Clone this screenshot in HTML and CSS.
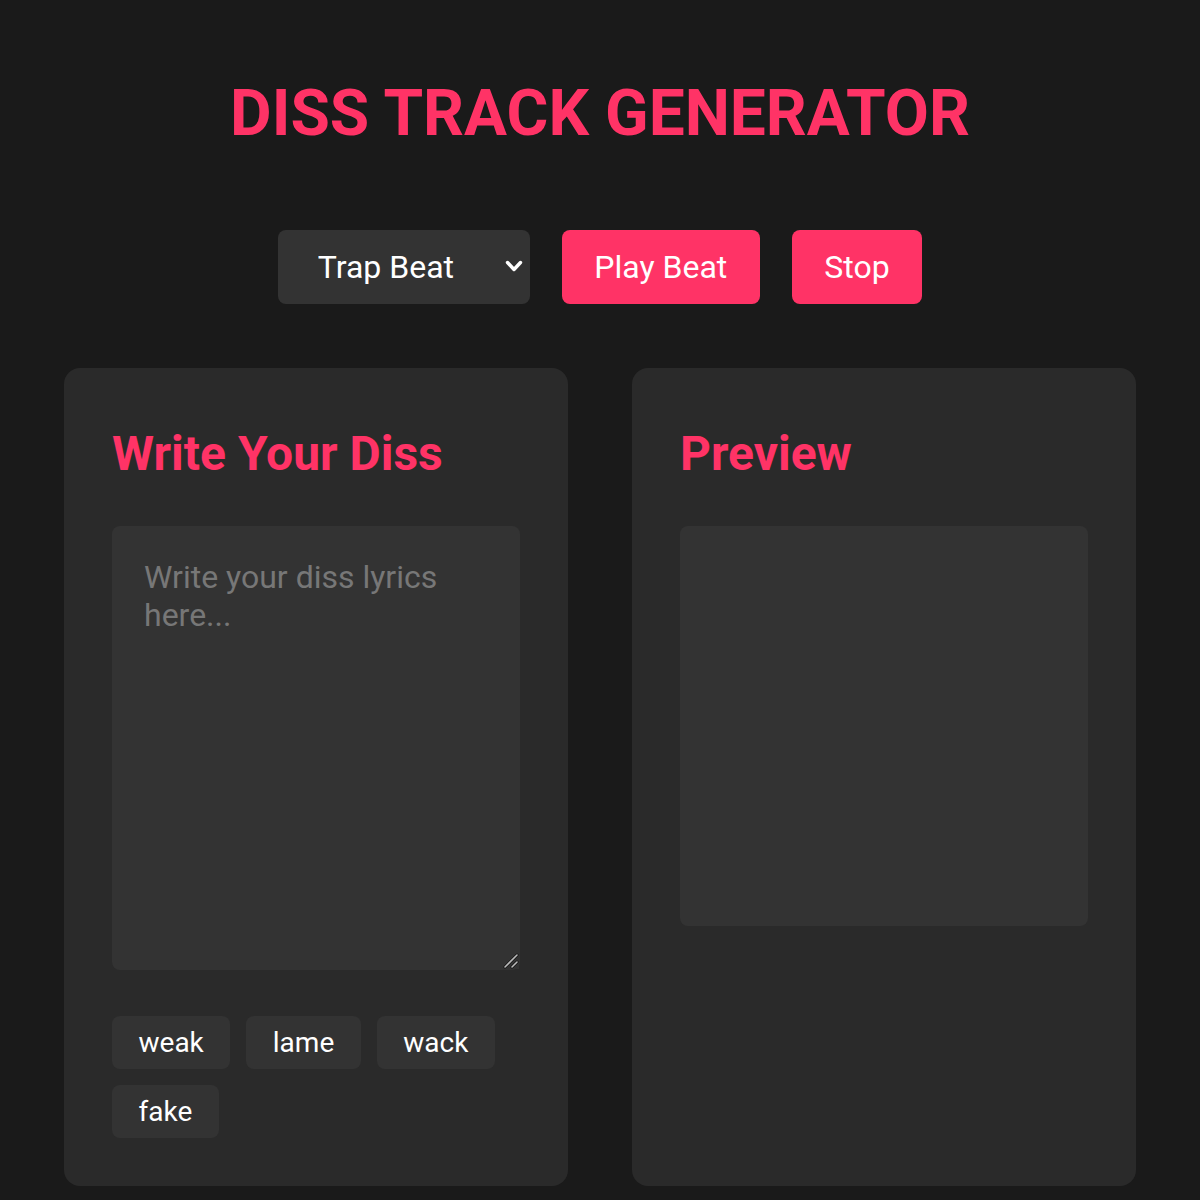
FILE: index.html
```html
<!DOCTYPE html>
<html lang="en">
<head>
    <meta charset="UTF-8">
    <meta name="viewport" content="width=device-width, initial-scale=1.0">
    <title>Diss Track Generator</title>
    <link rel="stylesheet" href="styles.css">
</head>
<body>
    <div class="app">
        <h1 class="title">DISS TRACK GENERATOR</h1>

        <div class="controls">
            <div class="select-wrap">
                <select id="beatSelect" class="beat-select">
                    <option value="trap">Trap Beat</option>
                    <option value="boom">Boom Bap</option>
                    <option value="drill">Drill Beat</option>
                </select>
                <svg class="chevron" viewBox="0 0 18 13" width="18" height="13">
                    <path d="M2.5 2.5l6.5 7 6.5-7" fill="none" stroke="#fff" stroke-width="3.4" stroke-linecap="round" stroke-linejoin="round"/>
                </svg>
            </div>
            <button class="btn" id="playBtn">Play Beat</button>
            <button class="btn" id="stopBtn">Stop</button>
        </div>

        <div class="panels">
            <div class="card">
                <h2>Write Your Diss</h2>
                <div class="lyrics-wrap">
                    <textarea id="lyrics" class="lyrics" placeholder="Write your diss lyrics here..."></textarea>
                    <svg class="grip" viewBox="0 0 16 16" width="16" height="16">
                        <path d="M2 14L14 2M9 14l5-5" stroke="#111" stroke-width="3" stroke-linecap="round"/>
                        <path d="M2 14L14 2M9 14l5-5" stroke="#bbb" stroke-width="1.6" stroke-linecap="round"/>
                    </svg>
                </div>
                <div class="tags">
                    <button class="tag">weak</button>
                    <button class="tag">lame</button>
                    <button class="tag">wack</button>
                    <button class="tag">fake</button>
                </div>
            </div>

            <div class="card">
                <h2>Preview</h2>
                <div id="preview" class="preview"></div>
            </div>
        </div>
    </div>

    <script>
        const lyrics = document.getElementById('lyrics');
        const preview = document.getElementById('preview');

        // Insert a word into the lyrics when a tag is clicked
        document.querySelectorAll('.tag').forEach(tag => {
            tag.addEventListener('click', () => {
                lyrics.value += (lyrics.value ? ' ' : '') + tag.textContent;
                updatePreview();
            });
        });

        lyrics.addEventListener('input', updatePreview);

        function updatePreview() {
            preview.textContent = lyrics.value;
        }
    </script>
</body>
</html>
```

FILE: styles.css
```css
* {
    box-sizing: border-box;
}

body {
    margin: 0;
    background: #1a1a1a;
    color: #fff;
    font-family: Roboto, "Liberation Sans", sans-serif;
}

.app {
    padding: 76px 64px 0;
}

.title {
    margin: 0;
    text-align: center;
    color: #ff3366;
    font-size: 64px;
    font-weight: 700;
    line-height: 75px;
}

.controls {
    display: flex;
    justify-content: center;
    gap: 32px;
    margin-top: 79px;
}

.select-wrap {
    position: relative;
}

.beat-select {
    appearance: none;
    -webkit-appearance: none;
    width: 252px;
    height: 74px;
    padding: 0 60px 0 40px;
    background: #333;
    color: #fff;
    border: none;
    border-radius: 8px;
    font-family: inherit;
    font-size: 32px;
}

.chevron {
    position: absolute;
    right: 7px;
    top: 30px;
    pointer-events: none;
}

.btn {
    height: 74px;
    padding: 0 32.5px;
    background: #ff3366;
    color: #fff;
    border: none;
    border-radius: 8px;
    font-family: inherit;
    font-size: 32px;
    cursor: pointer;
}

.panels {
    display: grid;
    grid-template-columns: 1fr 1fr;
    gap: 64px;
    margin-top: 64px;
}

.card {
    background: #2a2a2a;
    border-radius: 16px;
    padding: 48px;
}

.card h2 {
    margin: 9px 0 43px;
    color: #ff3366;
    font-size: 48px;
    font-weight: 700;
    line-height: 58px;
}

.lyrics-wrap {
    position: relative;
}

.lyrics {
    display: block;
    width: 100%;
    height: 444px;
    padding: 32px;
    background: #333;
    color: #fff;
    border: none;
    border-radius: 8px;
    font-family: inherit;
    font-size: 32px;
    line-height: 38px;
    resize: vertical;
}

.lyrics::placeholder {
    color: #777;
}

.grip {
    position: absolute;
    right: 1px;
    bottom: 1px;
    background: #333;
    pointer-events: none;
}

.tags {
    display: flex;
    flex-wrap: wrap;
    gap: 16px;
    margin-top: 46px;
}

.tag {
    height: 53px;
    padding: 0 26.5px;
    background: #333;
    color: #fff;
    border: none;
    border-radius: 8px;
    font-family: inherit;
    font-size: 28px;
    cursor: pointer;
}

.preview {
    height: 400px;
    background: #333;
    border-radius: 8px;
    padding: 32px;
    font-size: 32px;
    white-space: pre-wrap;
}
```
